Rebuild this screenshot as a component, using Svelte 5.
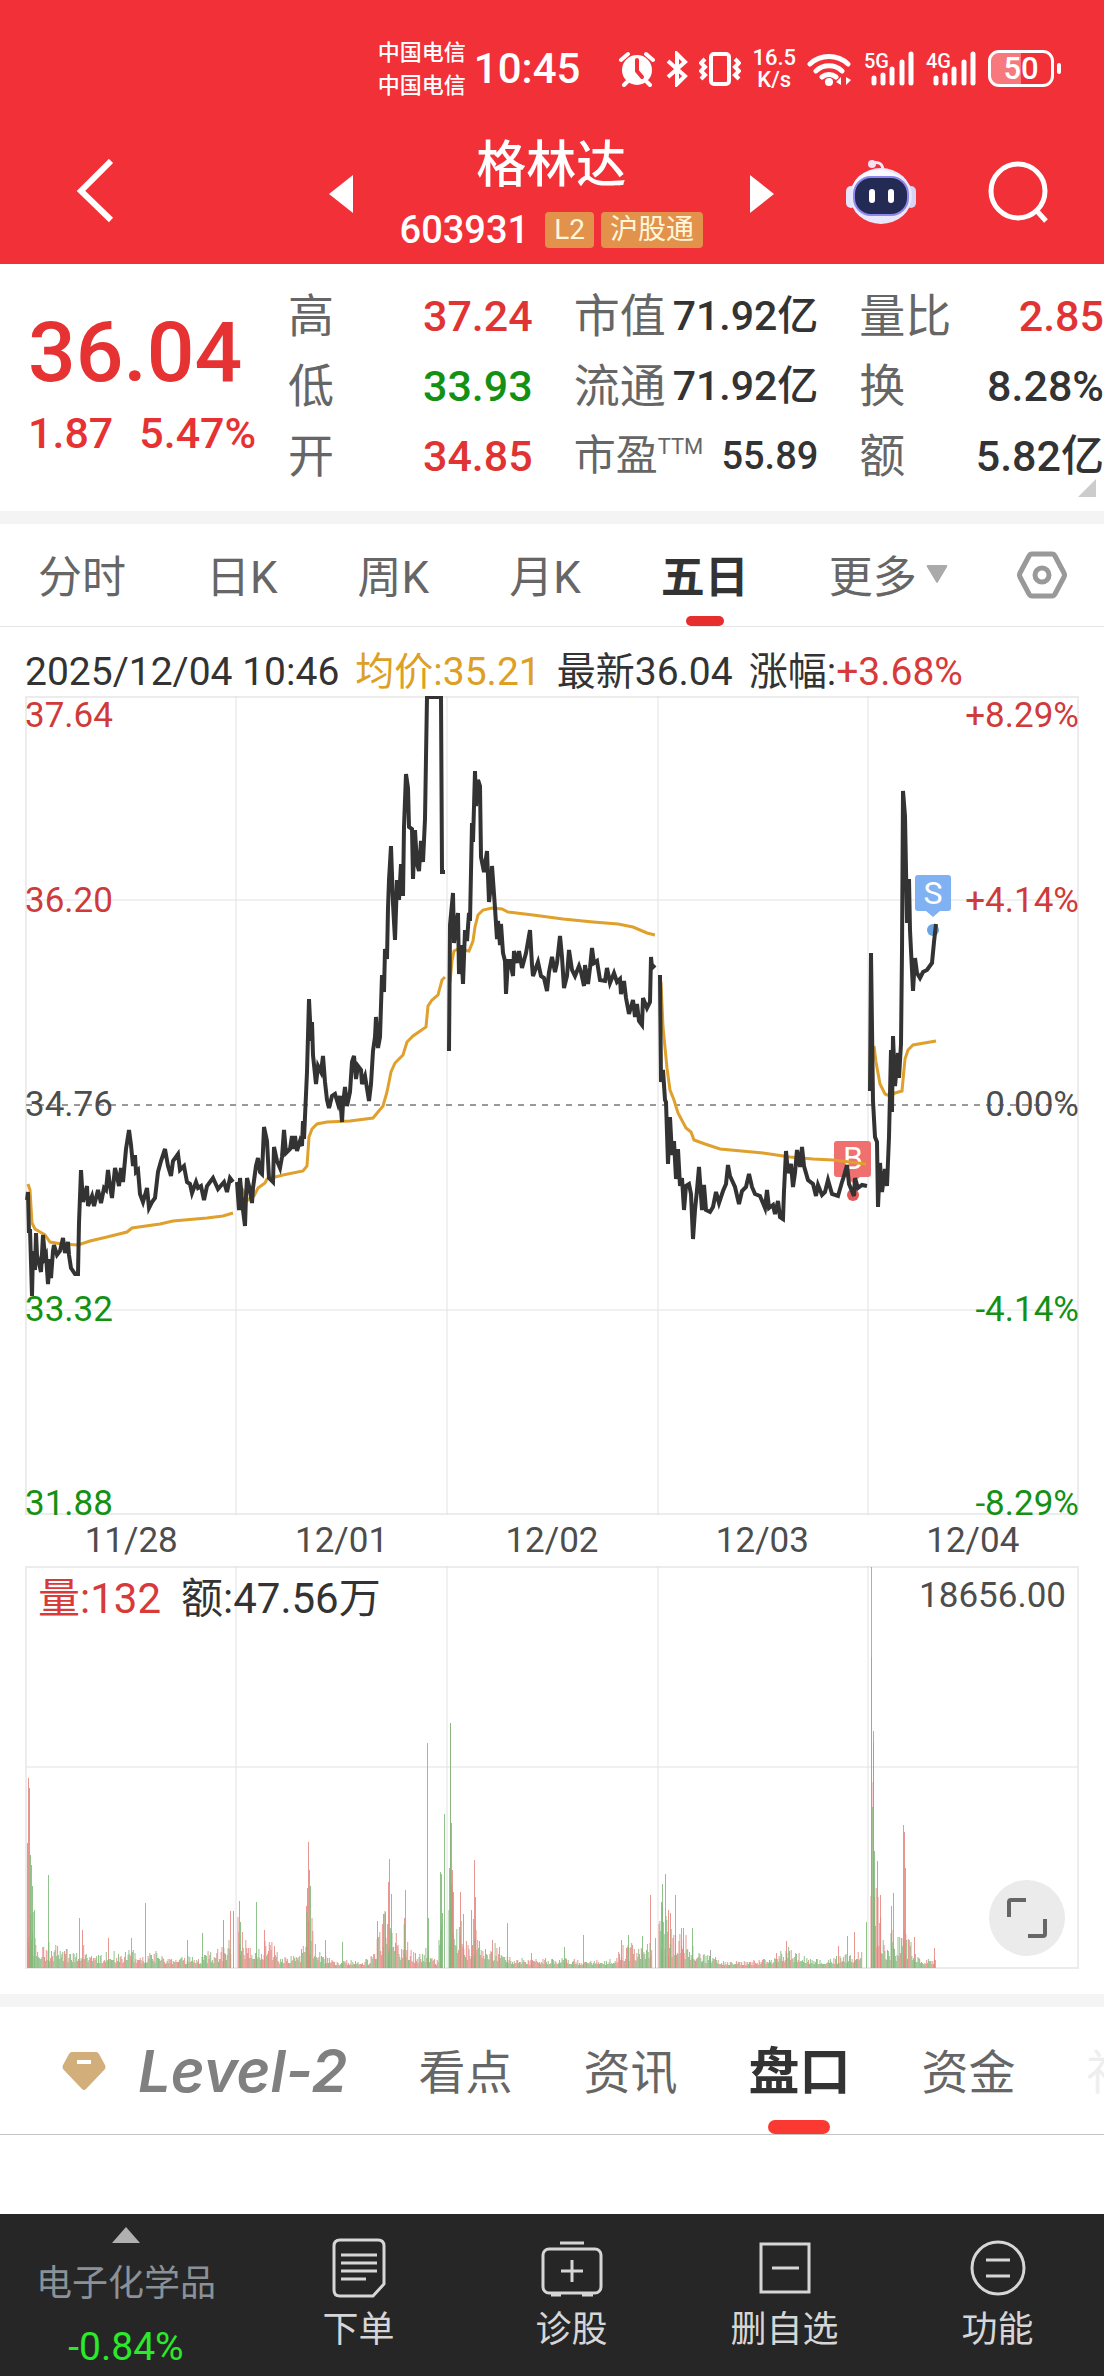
<script lang="ts">
	type Point = [number, number];

	const periods = ['分时', '日K', '周K', '月K', '五日'];
	let period = $state('五日');

	const sections = ['看点', '资讯', '盘口', '资金', '社区'];
	let section = $state('盘口');

	const dates = ['11/28', '12/01', '12/02', '12/03', '12/04'];
	const dayLines = [236, 447, 658, 868];

	const stats = [
		[
			{ label: '高', value: '37.24', tone: 'up' },
			{ label: '低', value: '33.93', tone: 'down' },
			{ label: '开', value: '34.85', tone: 'up' }
		],
		[
			{ label: '市值', value: '71.92亿', tone: 'long' },
			{ label: '流通', value: '71.92亿', tone: 'long' },
			{ label: '市盈', sup: 'TTM', value: '55.89', tone: '' }
		],
		[
			{ label: '量比', value: '2.85', tone: 'up' },
			{ label: '换', value: '8.28%', tone: '' },
			{ label: '额', value: '5.82亿', tone: '' }
		]
	];

	const axis = [
		{ y: 31, price: '37.64', pct: '+8.29%', tone: 'up' },
		{ y: 216, price: '36.20', pct: '+4.14%', tone: 'up' },
		{ y: 420, price: '34.76', pct: '0.00%', tone: 'flat' },
		{ y: 625, price: '33.32', pct: '-4.14%', tone: 'down' },
		{ y: 819, price: '31.88', pct: '-8.29%', tone: 'down' }
	];

	// one polyline per trading day
	const priceLines = [
		'27,504 28,496 29,537 30,533 32,600 33,555 35,574 36,537 37,559 41,576 43,539 45,561 46,559 48,588 50,563 51,582 53,555 54,549 57,559 60,555 63,542 65,557 68,546 69,559 71,572 75,578 78,578 79,527 81,474 83,506 87,490 88,510 92,500 94,510 98,494 101,507 104,492 106,494 108,474 110,490 112,502 115,472 117,480 119,490 121,472 123,486 126,453 129,434 131,449 133,470 135,459 136,476 138,474 140,498 143,506 147,492 149,512 152,506 155,502 158,476 161,465 165,453 168,470 171,480 173,465 178,458 180,474 184,470 187,486 190,488 192,497 196,486 198,492 201,490 204,504 207,490 213,482 218,493 224,486 227,496 230,482 233,486',
		'237,486 239,514 240,482 243,514 245,530 246,500 247,482 249,490 252,507 253,492 256,470 258,462 260,476 262,478 264,431 267,445 269,482 273,486 274,451 277,465 280,472 282,461 284,434 286,457 290,453 292,440 293,453 295,440 297,455 300,445 302,450 303,425 304,443 307,376 309,303 311,345 312,326 313,359 316,388 318,370 321,376 323,360 325,386 327,404 329,412 332,400 335,398 338,408 340,400 342,426 343,408 345,391 347,410 350,396 352,366 354,360 356,383 358,370 361,374 362,388 365,380 369,405 371,388 373,355 375,341 376,321 378,352 380,341 382,279 384,296 385,253 387,263 388,212 389,184 391,150 393,208 395,244 397,184 399,204 401,168 403,200 404,131 406,78 408,92 409,131 412,133 413,183 415,134 417,168 419,175 421,145 423,166 425,123 427,1 441,1 442,176 445,176',
		'449,355 450,229 453,197 454,247 456,229 458,217 459,278 461,249 463,288 465,234 467,245 469,217 470,225 472,127 473,146 475,75 476,110 478,84 480,90 481,161 484,176 487,155 489,206 491,188 492,170 495,212 497,243 498,225 500,249 501,228 503,257 505,265 506,298 508,265 510,265 513,280 514,255 517,267 519,255 522,272 526,257 530,234 532,269 533,280 538,266 541,280 544,282 547,295 549,276 552,261 555,276 557,267 560,240 562,261 564,292 567,280 569,254 572,274 575,280 579,270 581,276 584,290 585,269 588,288 590,272 592,252 594,267 597,265 600,284 605,285 607,272 610,287 614,277 617,286 620,283 621,298 624,285 626,302 629,318 633,304 635,321 637,308 639,325 642,329 643,302 647,312 650,306 651,261 652,272 655,269',
		'660,279 661,386 663,374 665,404 666,406 668,468 670,421 672,459 674,445 676,483 678,453 680,490 682,482 684,514 686,490 689,488 691,498 693,543 695,514 697,494 699,471 702,514 704,489 706,514 710,516 713,511 716,496 719,507 723,495 726,488 728,469 730,480 735,491 739,508 742,495 746,491 749,478 752,491 755,498 760,500 765,512 767,494 769,512 773,509 775,518 778,505 780,521 783,523 784,495 786,455 788,477 791,468 793,491 795,477 797,454 800,471 802,451 804,470 808,484 813,488 816,500 818,489 822,499 825,496 828,484 832,498 838,500 842,486 844,480 847,469 849,488 854,500 855,482 858,492 862,489 867,490',
		'870,395 871,257 873,405 875,441 877,446 878,511 880,467 882,496 885,473 887,490 889,441 891,354 892,416 893,340 895,390 898,357 899,382 901,348 902,255 903,95 905,120 907,227 909,183 910,234 913,295 915,262 917,277 920,282 923,276 927,274 932,267 934,246 936,228'
	];

	const averageLines = [
		'28,488 30,494 32,527 35,533 45,539 50,546 62,548 78,549 90,545 107,541 127,536 132,532 160,528 173,525 207,522 223,520 233,517',
		'237,486 243,494 248,504 254,500 258,492 265,487 267,483 283,479 303,475 307,470 309,441 312,433 317,428 327,426 350,425 373,422 383,410 387,396 391,376 395,367 403,359 407,346 413,340 426,331 428,310 432,304 438,299 442,284 445,281',
		'450,286 452,265 454,255 458,253 469,255 473,245 475,231 478,219 483,214 492,212 502,213 508,216 533,219 563,223 593,226 618,228 633,231 647,237 655,239',
		'661,286 663,331 667,372 670,394 674,404 678,417 686,432 691,436 694,444 705,448 720,453 763,457 790,461 813,463 833,464 866,468',
		'874,350 876,366 880,388 885,398 890,400 895,397 902,395 903,384 905,363 908,354 913,349 936,345'
	];

	// upper edge of the ordinary minute bars, day by day
	const volumeLevels: Point[][] = [
		[[28, 120], [34, 45], [45, 26], [60, 20], [75, 15], [81, 28], [90, 11], [105, 12], [110, 24], [120, 10], [130, 19], [140, 10], [155, 16], [170, 7], [200, 12], [222, 20], [231, 36]],
		[[238, 50], [246, 28], [255, 20], [264, 32], [272, 26], [280, 9], [300, 12], [306, 55], [311, 52], [320, 14], [335, 5], [370, 7], [376, 35], [388, 65], [400, 24], [405, 48], [412, 14], [430, 20], [437, 4], [443, 70]],
		[[449, 100], [455, 70], [461, 48], [468, 22], [475, 55], [485, 32], [500, 22], [510, 12], [530, 7], [560, 9], [590, 5], [615, 8], [625, 26], [640, 22], [652, 25]],
		[[659, 70], [672, 40], [682, 36], [692, 28], [700, 15], [715, 10], [730, 4], [760, 7], [775, 9], [786, 22], [800, 12], [820, 8], [840, 12], [862, 18]],
		[[871, 240], [874, 120], [877, 75], [884, 32], [890, 26], [893, 60], [896, 20], [902, 55], [908, 34], [915, 20], [920, 9], [936, 7]]
	];

	const volumeSpikes: [number, number, string][] = [
		[27, 125, 'down'], [28, 190, 'up'], [29, 180, 'down'], [30, 113, 'down'], [31, 103, 'up'], [32, 82, 'down'], [34, 58, 'down'],
		[48, 93, 'down'], [79, 50, 'up'], [82, 38, 'up'], [108, 30, 'up'], [131, 30, 'up'], [145, 65, 'up'], [187, 28, 'down'],
		[202, 35, 'down'], [223, 48, 'even'], [230, 57, 'up'], [233, 57, 'even'],
		[239, 67, 'down'], [240, 46, 'down'], [256, 66, 'down'], [264, 38, 'up'], [306, 62, 'up'], [307, 80, 'up'], [308, 126, 'up'],
		[309, 98, 'down'], [310, 82, 'down'], [325, 28, 'down'], [342, 26, 'down'], [377, 47, 'down'], [383, 54, 'up'], [385, 56, 'down'],
		[388, 86, 'up'], [389, 109, 'up'], [391, 74, 'down'], [404, 50, 'up'], [405, 78, 'up'], [427, 225, 'up'], [428, 50, 'down'],
		[440, 96, 'down'], [441, 94, 'down'], [444, 154, 'down'],
		[449, 100, 'up'], [450, 245, 'down'], [450, 245, 'up'], [451, 145, 'down'], [452, 98, 'up'], [453, 76, 'up'], [460, 76, 'up'],
		[463, 54, 'down'], [471, 58, 'up'], [474, 108, 'up'], [475, 71, 'down'], [507, 45, 'up'], [531, 15, 'down'], [564, 21, 'down'],
		[583, 33, 'down'], [621, 28, 'down'], [628, 33, 'down'], [642, 32, 'down'], [650, 73, 'up'], [655, 30, 'up'],
		[661, 66, 'down'], [662, 84, 'down'], [665, 94, 'down'], [668, 58, 'up'], [670, 55, 'up'], [675, 73, 'down'], [681, 40, 'up'],
		[683, 40, 'down'], [692, 40, 'down'], [710, 18, 'even'], [776, 15, 'up'], [786, 27, 'up'], [838, 22, 'up'], [847, 32, 'up'],
		[854, 36, 'up'], [866, 46, 'down'],
		[871, 311, 'up'], [871, 401, 'up'], [873, 237, 'down'], [873, 226, 'down'], [874, 117, 'down'], [877, 107, 'down'],
		[880, 73, 'up'], [891, 62, 'up'], [893, 75, 'down'], [903, 143, 'up'], [904, 136, 'up'], [905, 100, 'up'], [914, 31, 'up'], [934, 20, 'up']
	];

	function levelAt(levels: Point[], x: number) {
		for (let i = 1; i < levels.length; i++) {
			const [x0, y0] = levels[i - 1];
			const [x1, y1] = levels[i];
			if (x <= x1) return y0 + ((y1 - y0) * (x - x0)) / (x1 - x0);
		}
		return levels[levels.length - 1][1];
	}

	function buildVolume() {
		const paths: Record<string, string> = { up: '', down: '', even: '' };
		let seed = 77;
		const random = () => {
			seed = (seed * 16807) % 2147483647;
			return seed / 2147483647;
		};
		for (const levels of volumeLevels) {
			const end = levels[levels.length - 1][0];
			for (let x = levels[0][0]; x <= end; x += 0.87) {
				const h = 2 + levelAt(levels, x) * (0.2 + 0.8 * random() ** 1.5);
				const tone = random() < 0.5 ? 'up' : 'down';
				paths[tone] += `M${x.toFixed(1)} 402v-${h.toFixed(0)}`;
			}
		}
		for (const [x, h, tone] of volumeSpikes) {
			paths[tone] += `M${x + 0.5} 402v-${h}`;
		}
		return paths;
	}

	const volume = buildVolume();
</script>

{#snippet signal()}
	<svg class="signal" viewBox="0 0 44 36" aria-hidden="true">
		<path d="M3 27v5M12 24v8M21 18v14M31 11v21M40 3v29" />
	</svg>
{/snippet}

<div class="app">
	<header>
		<div class="status">
			<div class="carriers">
				<span>中国电信</span>
				<span>中国电信</span>
			</div>
			<time>10:45</time>
			<svg class="alarm" viewBox="0 0 36 36" aria-hidden="true">
				<circle cx="18" cy="19" r="15" fill="#fff" />
				<path d="M2 9l7-6M34 9l-7-6M8 31l-3 3M28 31l3 3" stroke="#fff" stroke-linecap="round" />
				<path class="hands" d="M18 9v11l5 6" />
			</svg>
			<svg class="bluetooth" viewBox="0 0 22 36" aria-hidden="true">
				<path d="M2 10l17 15-8 8V3l8 8L2 26" />
			</svg>
			<svg class="vibrate" viewBox="0 0 42 36" aria-hidden="true">
				<rect x="12" y="3" width="18" height="30" rx="3" />
				<path d="M6 8L2 12l4 4-4 4 4 4-4 4M36 8l4 4-4 4 4 4-4 4 4 4" />
			</svg>
			<div class="speed"><span>16.5</span><span>K/s</span></div>
			<svg class="wifi" viewBox="0 0 46 36" aria-hidden="true">
				<path d="M3 13a28 28 0 0 1 38 0M9 20a19 19 0 0 1 26 0M15 26a11 11 0 0 1 14 0" />
				<circle cx="22" cy="31" r="4" fill="#fff" />
				<path class="arrows" d="M29 31l5-5v8zM44 29l-5 5v-8z" />
			</svg>
			<div class="net"><span>5G</span>{@render signal()}</div>
			<div class="net"><span>4G</span>{@render signal()}</div>
			<div class="battery"><span>50</span></div>
		</div>

		<nav class="titlebar">
			<button class="icon-btn" aria-label="返回">
				<svg class="back" viewBox="0 0 38 76" aria-hidden="true"><path d="M35 2L5 32l30 29" /></svg>
			</button>
			<div class="switcher">
				<button class="icon-btn" aria-label="上一只">
					<svg class="arrow" viewBox="0 0 24 44" aria-hidden="true"><path d="M24 0v38L0 19z" /></svg>
				</button>
				<div class="symbol">
					<h1>格林达</h1>
					<div class="code">
						<span>603931</span>
						<em class="tag">L2</em>
						<em class="tag">沪股通</em>
					</div>
				</div>
				<button class="icon-btn" aria-label="下一只">
					<svg class="arrow" viewBox="0 0 24 44" aria-hidden="true"><path d="M0 0v38l24-19z" /></svg>
				</button>
			</div>
			<button class="icon-btn" aria-label="智能助手">
				<svg class="robot" viewBox="0 0 72 78" aria-hidden="true">
					<path d="M27 5c7-2 11 1 11 8" fill="none" stroke="#f5e8f4" stroke-width="3" />
					<circle cx="27" cy="6" r="4" fill="#f5dff0" />
					<rect x="1" y="28" width="10" height="22" rx="5" fill="#e6e4fb" />
					<rect x="61" y="28" width="10" height="22" rx="5" fill="#d5d3f6" />
					<ellipse cx="36" cy="38" rx="31" ry="28" fill="#e9e7fb" />
					<ellipse cx="34" cy="30" rx="26" ry="18" fill="#faf9ff" />
					<rect x="9" y="19" width="54" height="38" rx="17" fill="#232b55" stroke="#8f86ee" stroke-width="2" />
					<path d="M27 34v8M46 34v8" stroke="#fff" stroke-width="6" stroke-linecap="round" />
				</svg>
			</button>
			<button class="icon-btn" aria-label="搜索">
				<svg class="search" viewBox="0 0 62 72" aria-hidden="true">
					<circle cx="30" cy="30" r="27" />
					<path d="M48 49l10 11" />
				</svg>
			</button>
		</nav>
	</header>

	<section class="quote">
		<div class="price">
			<strong>36.04</strong>
			<div class="change"><span>1.87</span><span>5.47%</span></div>
		</div>
		{#each stats as column}
			<dl>
				{#each column as item}
					<div class="stat" class:small={item.sup}>
						<dt>{item.label}{#if item.sup}<sup>{item.sup}</sup>{/if}</dt>
						<dd class={item.tone}>{item.value}</dd>
					</div>
				{/each}
			</dl>
		{/each}
		<svg class="corner" viewBox="0 0 18 18" aria-hidden="true"><path d="M18 0v18H0z" /></svg>
	</section>

	<nav class="periods">
		<div class="tabs">
			{#each periods as name}
				<button class:active={period === name} onclick={() => (period = name)}>{name}</button>
			{/each}
			<button class="more">
				更多
				<svg viewBox="0 0 22 18" aria-hidden="true"><path d="M2 0h18q2 0 1 2l-9 15q-1 2-2 0L1 2q-1-2 1-2z" /></svg>
			</button>
		</div>
		<button class="settings" aria-label="设置">
			<svg viewBox="0 0 50 48" aria-hidden="true">
				<path d="M15 3h20q2 0 3 2l9 17q1 2 0 4l-9 17q-1 2-3 2H15q-2 0-3-2L3 26q-1-2 0-4l9-17q1-2 3-2z" />
				<circle cx="25" cy="24" r="7" />
			</svg>
		</button>
	</nav>

	<section class="chart">
		<div class="readout">
			<span>2025/12/04 10:46</span>
			<span class="avg">均价:35.21</span>
			<span>最新36.04</span>
			<span>涨幅:<b>+3.68%</b></span>
		</div>

		<svg class="plot" viewBox="0 0 1104 826" role="img" aria-label="五日走势">
			<path class="frame" d="M26 1h1052v817H26z" />
			<path class="rule" d="M26 204h1052M26 614h1052" />
			{#each dayLines as x}
				<path class="rule" d="M{x} 0v819" />
			{/each}
			<path class="base" d="M26 409h1052" />

			<g class="marker sell">
				<path d="M918 179h30q3 0 3 3v30q0 3-3 3h-8l-7 6-7-6h-8q-3 0-3-3v-30q0-3 3-3z" />
				<circle cx="933" cy="234" r="6" />
				<text x="933" y="208">S</text>
			</g>
			<g class="marker buy">
				<path d="M837 445h31q3 0 3 3v30q0 3-3 3h-8l-7 6-7-6h-9q-3 0-3-3v-30q0-3 3-3z" />
				<circle cx="853" cy="499" r="6" />
				<text x="853" y="473">B</text>
			</g>

			{#each averageLines as points}
				<polyline class="average" {points} />
			{/each}
			{#each priceLines as points}
				<polyline class="trace" {points} />
			{/each}

			{#each axis as row}
				<text class="axis {row.tone}" x="25" y={row.y}>{row.price}</text>
				<text class="axis end {row.tone}" x="1079" y={row.y}>{row.pct}</text>
			{/each}
		</svg>

		<div class="dates">
			{#each dates as date}
				<span>{date}</span>
			{/each}
		</div>

		<div class="volume">
			<svg class="plot" viewBox="0 0 1104 404" role="img" aria-label="成交量">
				<path class="frame" d="M26 1h1052v401H26z" />
				<path class="rule" d="M26 201h1052" />
				{#each dayLines as x}
					<path class="rule" d="M{x} 0v402" />
				{/each}
				<path class="bars even" d={volume.even} />
				<path class="bars up" d={volume.up} />
				<path class="bars down" d={volume.down} />
			</svg>
			<div class="legend">
				<span class="vol">量:132</span>
				<span>额:47.56万</span>
				<span class="max">18656.00</span>
			</div>
			<button class="expand" aria-label="全屏">
				<svg viewBox="0 0 40 40" aria-hidden="true"><path d="M2 19V4q0-2 2-2h15M38 21v15q0 2-2 2H21" /></svg>
			</button>
		</div>
	</section>

	<nav class="sections">
		<button class="level">
			<svg viewBox="0 0 44 40" aria-hidden="true">
				<path d="M10 1h24q2 0 3 2l6 11q1 2 0 4L24 38q-2 2-4 0L1 18q-1-2 0-4L7 3q1-2 3-2z" fill="#d2ae7a" />
				<path d="M15 11h14" stroke="#fff" stroke-width="4" />
			</svg>
			<span>Level-2</span>
		</button>
		{#each sections as name, i}
			<button class:active={section === name} class:faded={i === sections.length - 1} onclick={() => (section = name)}>{name}</button>
		{/each}
	</nav>

	<footer>
		<button class="sector">
			<svg viewBox="0 0 28 16" aria-hidden="true"><path d="M14 0l14 16H0z" /></svg>
			<span>电子化学品</span>
			<b>-0.84%</b>
		</button>
		<button>
			<svg viewBox="0 0 62 60" aria-hidden="true">
				<path d="M12 2h38q6 0 6 6v38L45 58H12q-6 0-6-6V8q0-6 6-6z" />
				<path d="M13 17h36M13 25h36M13 33h36M13 41h25" />
			</svg>
			下单
		</button>
		<button>
			<svg viewBox="0 0 62 60" aria-hidden="true">
				<rect x="2" y="11" width="58" height="44" rx="6" />
				<path d="M19 5h24M31 22v22M20 33h22M10 57h10M41 57h11" />
			</svg>
			诊股
		</button>
		<button>
			<svg viewBox="0 0 62 60" aria-hidden="true">
				<rect x="7" y="6" width="48" height="48" />
				<path d="M18 30h27" />
			</svg>
			删自选
		</button>
		<button>
			<svg viewBox="0 0 62 60" aria-hidden="true">
				<circle cx="31" cy="30" r="26" />
				<path d="M19 22h24M19 38h24" />
			</svg>
			功能
		</button>
	</footer>
</div>

<style>
	:global(body) {
		margin: 0;
		background: #fff;
	}

	.app {
		display: flex;
		flex-direction: column;
		min-height: 100vh;
		overflow: hidden;
		font-family: Roboto, 'Noto Sans CJK SC', sans-serif;
		color: #333;
	}

	button {
		padding: 0;
		border: none;
		background: none;
		font: inherit;
		color: inherit;
		white-space: nowrap;
		cursor: pointer;
	}

	svg {
		display: block;
		flex: none;
	}

	.up {
		color: #e03434;
		fill: #cf3a3a;
	}
	.down {
		color: #149114;
		fill: #149114;
	}

	header {
		background: #f23038;
		color: #fff;
	}

	/* status bar */
	.status {
		display: flex;
		align-items: center;
		justify-content: flex-end;
		gap: 11px;
		box-sizing: border-box;
		height: 129px;
		padding: 8px 50px 0 0;
	}
	.carriers {
		display: flex;
		flex-direction: column;
		font-size: 22px;
		line-height: 33px;
		font-weight: 500;
	}
	.status time {
		margin: 0 28px 0 -3px;
		font-size: 42px;
		font-weight: 500;
	}
	.status svg {
		height: 36px;
		fill: none;
		stroke: #fff;
		stroke-width: 4px;
	}
	.alarm {
		width: 36px;
	}
	.status .alarm circle {
		stroke: none;
	}
	.alarm .hands {
		stroke: #f23038;
		stroke-linecap: round;
	}
	.bluetooth {
		width: 22px;
	}
	.vibrate {
		width: 42px;
	}
	.status .wifi {
		width: 46px;
		stroke-width: 5px;
		stroke-linecap: round;
	}
	.wifi circle {
		stroke: none;
	}
	.wifi .arrows {
		fill: #fff;
		stroke: none;
	}
	.speed {
		display: flex;
		flex-direction: column;
		align-items: center;
		font-size: 22px;
		line-height: 22px;
		font-weight: 500;
	}
	.net {
		position: relative;
		padding-left: 7px;
	}
	.net span {
		position: absolute;
		top: -1px;
		left: 0;
		font-size: 20px;
		line-height: 22px;
		font-weight: 500;
	}
	.status .signal {
		width: 44px;
		stroke-width: 5px;
		stroke-linecap: round;
	}
	.battery {
		position: relative;
		box-sizing: border-box;
		width: 66px;
		height: 37px;
		border: 3px solid #fff;
		border-radius: 11px;
		background: linear-gradient(90deg, #f7797e 50%, transparent 50%);
		text-align: center;
		font-size: 31px;
		line-height: 31px;
		font-weight: 500;
	}
	.battery::after {
		content: '';
		position: absolute;
		top: 10px;
		right: -10px;
		width: 4px;
		height: 11px;
		border-radius: 2px;
		background: #fff;
	}

	/* title bar */
	.titlebar {
		display: flex;
		align-items: center;
		gap: 71px;
		height: 132px;
		padding: 2px 54px 1px 76px;
	}
	.back {
		width: 38px;
		height: 76px;
		fill: none;
		stroke: #fff;
		stroke-width: 6px;
	}
	.switcher {
		display: flex;
		align-items: center;
		gap: 47px;
		margin-left: auto;
	}
	.arrow {
		width: 24px;
		height: 44px;
		fill: #fff;
	}
	.symbol {
		text-align: center;
	}
	h1 {
		margin: 0;
		font-size: 50px;
		line-height: 66px;
		font-weight: 500;
	}
	.code {
		display: flex;
		align-items: center;
		gap: 7px;
		height: 64px;
		font-size: 38px;
		font-weight: 500;
	}
	.code span {
		margin-right: 9px;
	}
	.tag {
		padding: 0 9px;
		border-radius: 4px;
		background: #e3924c;
		color: #fff6dc;
		font-size: 28px;
		line-height: 36px;
		font-style: normal;
		font-weight: 400;
	}
	.robot {
		width: 72px;
		height: 78px;
	}
	.search {
		width: 62px;
		height: 72px;
		fill: none;
		stroke: #fff;
		stroke-width: 5px;
	}

	/* quote */
	.quote {
		position: relative;
		display: grid;
		grid-template-columns: 219px 1fr 1fr 1fr;
		column-gap: 41px;
		padding: 17px 0 20px 28px;
	}
	.price {
		padding-top: 30px;
		color: #e63232;
		font-weight: 500;
		white-space: nowrap;
	}
	.price strong {
		display: block;
		font-size: 84px;
		line-height: 84px;
		font-weight: 500;
	}
	.change {
		display: flex;
		gap: 26px;
		font-size: 43px;
		line-height: 76px;
	}
	dl {
		margin: 0;
	}
	.stat {
		display: flex;
		align-items: center;
		justify-content: space-between;
		height: 70px;
		white-space: nowrap;
	}
	dt {
		color: #666;
		font-size: 46px;
		line-height: 70px;
	}
	dd {
		margin: 0;
		font-size: 43px;
		line-height: 70px;
		font-weight: 500;
	}
	.long {
		font-size: 41px;
	}
	.small dt {
		font-size: 42px;
	}
	.small dd {
		font-size: 38px;
	}
	sup {
		font-size: 22px;
		line-height: 22px;
		vertical-align: 16px;
	}
	.corner {
		position: absolute;
		right: 8px;
		bottom: 14px;
		width: 18px;
		height: 18px;
		fill: #ccc;
	}

	/* period tabs */
	.periods {
		display: flex;
		align-items: center;
		justify-content: space-between;
		height: 102px;
		padding: 0 37px 0 38px;
		border-top: 13px solid #f4f4f4;
		border-bottom: 1px solid #e4e4e4;
		font-size: 44px;
		color: #666;
	}
	.tabs {
		display: flex;
		gap: 80px;
	}
	.tabs button {
		position: relative;
		height: 102px;
		padding-bottom: 3px;
	}
	.tabs .active {
		color: #333;
		font-weight: 700;
	}
	.active::after {
		content: '';
		position: absolute;
		bottom: 0;
		left: 50%;
		width: 38px;
		height: 10px;
		margin-left: -19px;
		border-radius: 5px;
		background: #e62e2e;
	}
	.more {
		display: flex;
		align-items: center;
		gap: 9px;
	}
	.more svg {
		width: 22px;
		height: 18px;
		fill: #aaa;
	}
	.settings svg {
		width: 50px;
		height: 48px;
		fill: none;
		stroke: #999;
		stroke-width: 5px;
	}

	/* charts */
	.readout {
		display: flex;
		gap: 16px;
		padding: 21px 25px 0;
		font-size: 39px;
		line-height: 48px;
		white-space: nowrap;
	}
	.readout b {
		color: #d83a3a;
		font-weight: 400;
	}
	.avg {
		color: #dd9f25;
	}
	.plot {
		width: 100%;
		height: auto;
	}
	.frame {
		fill: none;
		stroke: #ececec;
		stroke-width: 2px;
	}
	.rule {
		stroke: #e2e2e2;
		stroke-width: 1px;
	}
	.base {
		stroke: #999;
		stroke-width: 2px;
		stroke-dasharray: 6 6;
	}
	.trace,
	.average {
		fill: none;
		stroke: #333;
		stroke-width: 4px;
	}
	.average {
		stroke: #dfa02c;
		stroke-width: 3px;
	}
	.axis {
		font-size: 35px;
	}
	.flat {
		fill: #4d4d4d;
	}
	.end {
		text-anchor: end;
	}
	.sell {
		fill: #7fb1f3;
	}
	.sell circle {
		fill: #6aa3e4;
	}
	.buy {
		fill: #f07070;
	}
	.buy circle {
		fill: #e25757;
	}
	.marker text {
		fill: #fff;
		font-size: 32px;
		text-anchor: middle;
	}
	.dates {
		display: grid;
		grid-template-columns: repeat(5, 1fr);
		padding: 0 26px 6px;
		color: #4d4d4d;
		font-size: 35px;
		line-height: 38px;
		text-align: center;
	}
	.volume {
		position: relative;
		padding-bottom: 24px;
	}
	.bars {
		fill: none;
		stroke-width: 1px;
		stroke-opacity: 0.85;
	}
	.bars.up {
		stroke: #e5857f;
	}
	.bars.down {
		stroke: #7cb878;
	}
	.bars.even {
		stroke: #999;
	}
	.legend {
		position: absolute;
		top: 9px;
		left: 38px;
		right: 38px;
		display: flex;
		gap: 20px;
		font-size: 42px;
		line-height: 48px;
	}
	.vol {
		color: #d83a3a;
	}
	.max {
		margin-left: auto;
		color: #4d4d4d;
		font-size: 35px;
		line-height: 42px;
	}
	.expand {
		position: absolute;
		right: 39px;
		bottom: 38px;
		display: grid;
		place-items: center;
		width: 76px;
		height: 76px;
		border-radius: 50%;
		background: #ebebeb;
	}
	.expand svg {
		width: 40px;
		height: 40px;
		fill: none;
		stroke: #666;
		stroke-width: 4px;
	}

	/* section tabs */
	.sections {
		display: flex;
		align-items: center;
		gap: 71px;
		height: 127px;
		padding-left: 62px;
		border-top: 13px solid #f4f4f4;
		border-bottom: 1px solid #c4c4c4;
		overflow: hidden;
		color: #666;
		font-size: 47px;
	}
	.sections button {
		position: relative;
		height: 127px;
		padding-bottom: 5px;
	}
	.sections .level {
		display: flex;
		align-items: center;
		gap: 32px;
		padding-bottom: 0;
		color: #808080;
		font-family: Inter, sans-serif;
		font-size: 58px;
		font-style: italic;
		font-weight: 600;
	}
	.level svg {
		width: 44px;
		height: 40px;
	}
	.sections .active {
		color: #333;
		font-size: 51px;
		font-weight: 700;
	}
	.sections .active::after {
		width: 62px;
		height: 14px;
		margin-left: -31px;
		border-radius: 7px;
		background: #fa3a32;
	}
	.sections .faded {
		color: #eee;
	}

	/* bottom bar */
	footer {
		display: grid;
		grid-template-columns: 252px repeat(4, 1fr);
		height: 162px;
		margin-top: auto;
		background: #262626;
		color: #d6d6d6;
		font-size: 36px;
		line-height: 44px;
	}
	footer button {
		display: flex;
		flex-direction: column;
		align-items: center;
		gap: 10px;
		padding-top: 24px;
	}
	footer svg {
		width: 62px;
		height: 60px;
		fill: none;
		stroke: #d6d6d6;
		stroke-width: 3px;
	}
	footer .sector {
		gap: 0;
		padding-top: 13px;
		color: #8a9298;
	}
	.sector svg {
		width: 28px;
		height: 16px;
		fill: #b0b0b0;
		stroke: none;
	}
	.sector span {
		line-height: 82px;
	}
	.sector b {
		color: #2aea2a;
		font-size: 39px;
		font-weight: 400;
	}
</style>
